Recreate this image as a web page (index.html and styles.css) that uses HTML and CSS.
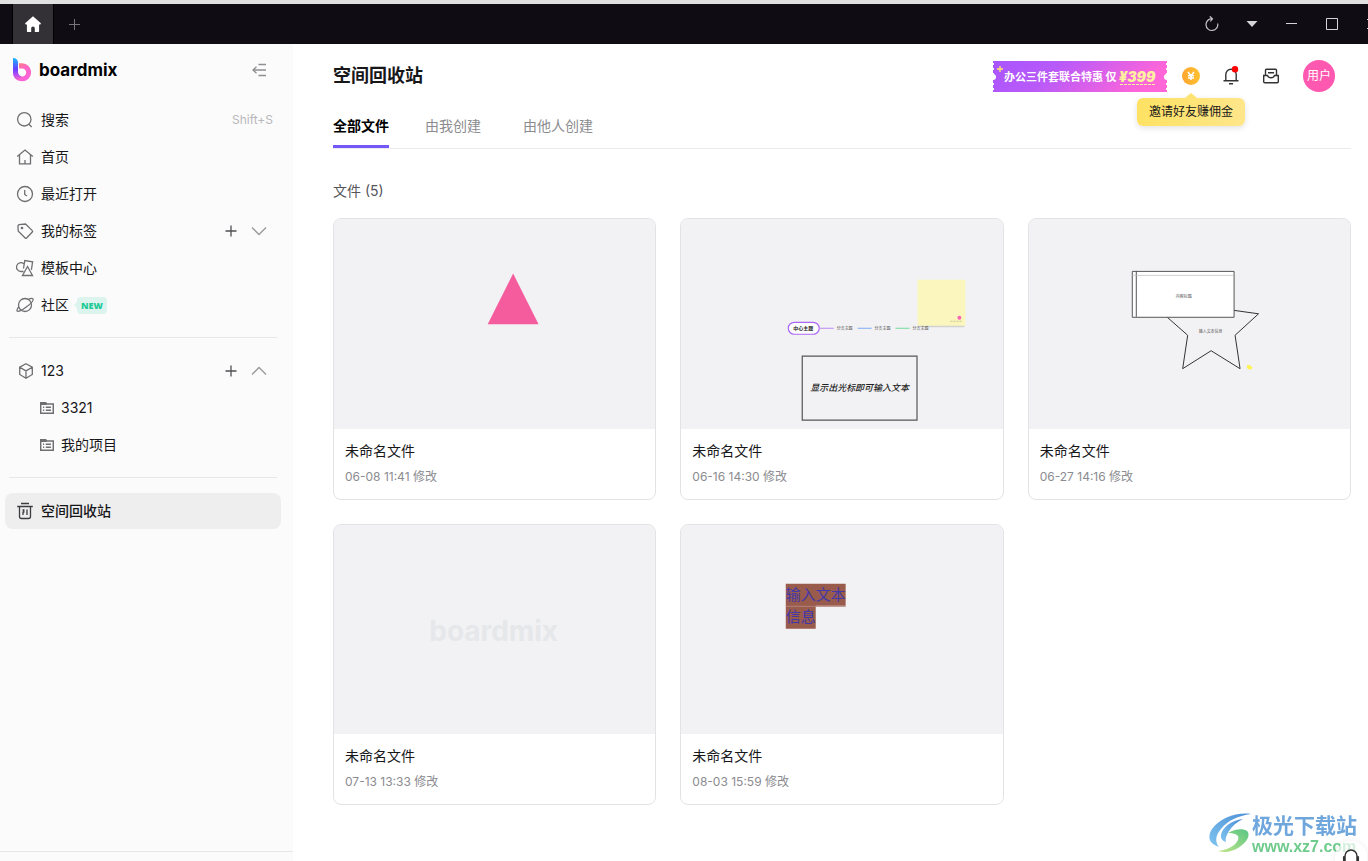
FILE: index.html
```html
<!DOCTYPE html>
<html lang="zh-CN">
<head>
<meta charset="utf-8">
<title>空间回收站 - boardmix</title>
<meta name="viewport" content="width=device-width, initial-scale=1">
<link rel="stylesheet" href="styles.css">
</head>
<body>
<div class="strip"></div>
<header class="titlebar">
  <button class="home-tab" aria-label="主页">
    <svg width="18" height="18" viewBox="0 0 18 18"><path d="M9 1.2 16.6 8c.6.6.2 1.4-.6 1.4h-.9V16c0 .6-.4 1-1 1h-3.3v-3.6c0-1-.8-1.8-1.8-1.8s-1.8.8-1.8 1.8V17H3.9c-.6 0-1-.4-1-1V9.400H2c-.8 0-1.200-.8-.6-1.400z" fill="#fff"/></svg>
  </button>
  <button class="win-btn" aria-label="新建标签">
    <svg width="11" height="11" viewBox="0 0 11 11"><path d="M5.500 0v11M0 5.500h11" stroke="#77757c" fill="none"/></svg>
  </button>
  <div class="win-controls">
    <button class="win-btn" aria-label="刷新"><svg width="16" height="16" viewBox="0 0 16 16" fill="none" stroke="#c4c3c6" stroke-width="1.200"><path d="M13.700 7.500A5.900 5.900 0 1 1 8 2.700M5.800.3 8.500 2.700 6.300 5.500"/></svg></button>
    <button class="win-btn" aria-label="更多"><svg width="12" height="8" viewBox="0 0 12 8"><path d="M.5 1h11L6 7z" fill="#d5d4d6"/></svg></button>
    <button class="win-btn" aria-label="最小化"><svg width="12" height="12" viewBox="0 0 12 12"><path d="M0 5.500h11" stroke="#d5d4d6"/></svg></button>
    <button class="win-btn" aria-label="最大化"><svg width="12" height="12" viewBox="0 0 12 12"><path d="M.5.5h11v11H.5z" fill="none" stroke="#d5d4d6"/></svg></button>
    <button class="win-btn" aria-label="关闭"><svg width="10" height="10" viewBox="0 0 10 10"><path d="m0 0 10 10M10 0 0 10" stroke="#d5d4d6"/></svg></button>
  </div>
</header>

<div class="app">
  <aside class="sidebar">
    <div class="brand">
      <svg width="18" height="24" viewBox="0 0 18 24" fill="none">
        <defs>
          <linearGradient id="stem" x1="0" y1="0" x2="0" y2="1"><stop offset="0" stop-color="#18b8ff"/><stop offset=".5" stop-color="#6a3dff"/><stop offset=".75" stop-color="#b44df5"/><stop offset="1" stop-color="#ff66c4"/></linearGradient>
          <linearGradient id="bowl" x1="0" y1="0" x2=".6" y2="1"><stop offset="0" stop-color="#ff8a5c"/><stop offset=".45" stop-color="#ff66c4"/><stop offset="1" stop-color="#fb63d8"/></linearGradient>
        </defs>
        <path d="M6 5.300h3.200A9 9 0 1 1 .1 14.400L5 14.300a4.100 4.100 0 1 0 4.200-3.900H6z" fill="url(#bowl)"/>
        <path d="M0 0c3 0 5 1.800 5 4.500v9.800c.1 2 1.500 3.700 3.500 4.100L5 22.400C1.700 21 0 18.300 0 14.600z" fill="url(#stem)"/>
      </svg>
      <span class="wordmark">boardmix</span>
      <button class="icon-btn collapse" aria-label="收起侧栏"><svg width="16" height="14" viewBox="0 0 16 14" fill="none" stroke="#8f8f91" stroke-width="1.300"><path d="M6.500 1.500H14M1.500 7H14M6.500 12.500H14M4.500 3.700 1 7l3.500 3.300"/></svg></button>
    </div>
    <nav class="nav">
      <a class="item" href="#"><svg class="ico" viewBox="0 0 18 18"><circle cx="8.300" cy="8.300" r="6.700"/><path d="m13 13.200 2.600 2.800"/></svg>搜索<span class="key">Shift+S</span></a>
      <a class="item" href="#"><svg class="ico" viewBox="0 0 18 18"><path d="M1.200 8.600 9 2l7.800 6.600M3.500 7v8.800h11V7M9 15.800V12"/></svg>首页</a>
      <a class="item" href="#"><svg class="ico" viewBox="0 0 18 18"><circle cx="9" cy="9" r="7.500"/><path d="M8.700 5v4.500l2.300 1.500"/></svg>最近打开</a>
      <div class="item"><a class="link" href="#"><svg class="ico" viewBox="0 0 18 18"><path d="M3 2.700 9.500 2 16.300 8.600a1 1 0 0 1 0 1.400l-5.700 6a1 1 0 0 1-1.400 0L2.300 9.300 1.900 4z"/><circle cx="6" cy="6" r=".7"/></svg>我的标签</a>
        <span class="actions"><button class="icon-btn" aria-label="添加标签"><svg width="12" height="12" viewBox="0 0 12 12"><path class="plus" d="M6 .5v11M.5 6h11"/></svg></button><button class="icon-btn" aria-label="展开"><svg width="16" height="10" viewBox="0 0 16 10"><path class="chev" d="m1 1.500 7 7 7-7"/></svg></button></span></div>
      <a class="item" href="#"><svg class="ico" viewBox="0 0 18 18"><path d="M7.500 12.500H5a4.400 4.400 0 1 1 2.700-7.800M7.500 9.500 8.800 1.500l7.800 1.300-1.200 8M11.500 7.500l5 9H6.500z"/></svg>模板中心</a>
      <a class="item" href="#"><svg class="ico" viewBox="0 0 18 18"><circle cx="9" cy="9" r="6.500"/><path d="M12.500 3.200c2.400-1 4-1.100 4.400-.4.900 1.500-2 4.900-6.300 7.900C6 14.200 2 16.300 1.100 15c-.5-.8.300-2.500 1.800-4.200"/></svg>社区<span class="badge">NEW</span></a>
    </nav>
    <hr class="rule">
    <nav class="nav">
      <div class="item"><a class="link" href="#"><svg class="ico" viewBox="0 0 18 18"><path d="m10 1.700 6.300 3.500v7.300L10 16.300l-6.300-3.800V5.200zM3.700 5.200 10 8.900l6.300-3.700M10 8.900v7.400"/></svg>123</a>
        <span class="actions"><button class="icon-btn" aria-label="添加项目"><svg width="12" height="12" viewBox="0 0 12 12"><path class="plus" d="M6 .5v11M.5 6h11"/></svg></button><button class="icon-btn" aria-label="收起"><svg width="16" height="10" viewBox="0 0 16 10"><path class="chev" d="m1 8.500 7-7 7 7"/></svg></button></span></div>
      <a class="item sub" href="#"><svg class="ico small" viewBox="0 0 14 14"><path d="M.7 12.300V1.700h5l1 1.300h6.600v9.300zM.7 3.300h6M3 6.300h1.200M3 9.300h1.200M5.800 6.300H11M5.800 9.300H11"/></svg>3321</a>
      <a class="item sub" href="#"><svg class="ico small" viewBox="0 0 14 14"><path d="M.7 12.300V1.700h5l1 1.300h6.600v9.300zM.7 3.300h6M3 6.300h1.200M3 9.300h1.200M5.800 6.300H11M5.800 9.300H11"/></svg>我的项目</a>
    </nav>
    <hr class="rule">
    <nav class="nav">
      <a class="item active" href="#" aria-current="page"><svg class="ico" viewBox="0 0 18 18"><path d="M5 1.500h8M1.200 4.500h15.600M3.500 4.500v10a2 2 0 0 0 2 2h7a2 2 0 0 0 2-2v-10M6.500 8h1.300v2.200H7V13M11 7.500V13"/></svg>空间回收站</a>
    </nav>
    <div class="side-foot"></div>
  </aside>

  <main class="main">
    <div class="head">
      <h1>空间回收站</h1>
      <div class="tools">
        <button class="promo">
          <svg width="174" height="31" viewBox="0 0 174 31">
            <defs><linearGradient id="promo" x1="0" y1="0" x2="1" y2=".2"><stop offset="0" stop-color="#a855ff"/><stop offset=".4" stop-color="#b95af8"/><stop offset="1" stop-color="#ff66d8"/></linearGradient></defs>
            <path d="M0 0h174v31H0z" fill="url(#promo)"/>
            <path d="M0 2v29M174 2v29" stroke="#fff" stroke-width="2" stroke-dasharray="2 3"/>
            <circle cx="0" cy="16" r="3" fill="#fff"/><circle cx="174" cy="16" r="3" fill="#fff"/>
            <path d="M7 5v6M4 8h6" stroke="#ffe66b" stroke-width="1.300"/>
            <text class="promo-text" x="11" y="20">办公三件套联合特惠 仅</text>
            <text class="promo-price" x="126" y="21">¥399</text>
            <path d="M127 23.500h36" stroke="#fff0a0" stroke-dasharray="3 1"/>
          </svg>
        </button>
        <button class="tool coin" aria-label="邀请好友赚佣金">
          <svg width="18" height="18" viewBox="0 0 18 18"><defs><linearGradient id="coin"><stop offset="0" stop-color="#ffa52e"/><stop offset="1" stop-color="#ffc233"/></linearGradient></defs><circle cx="9" cy="9" r="9" fill="url(#coin)"/><path d="m6 5 3 3.800L12 5M9 8.500V13M6 8.800h6M6 11h6" stroke="#fff" stroke-width="1.500" fill="none"/></svg>
          <span class="tip">邀请好友赚佣金</span>
        </button>
        <button class="tool" aria-label="通知">
          <svg width="18" height="20" viewBox="0 0 18 20" fill="none" stroke="#333" stroke-width="1.400"><path d="M3.800 14.800V8.500a5.200 5.200 0 0 1 10.400 0v6.300M1.500 14.800h15M7 17.800h4"/><circle cx="13" cy="3.200" r="3.200" fill="red" stroke="none"/></svg>
        </button>
        <button class="tool" aria-label="收件箱">
          <svg width="18" height="18" viewBox="0 0 18 18" fill="none" stroke="#333" stroke-width="1.400"><path d="M3.500 8V3.300a1 1 0 0 1 1-1h9a1 1 0 0 1 1 1V8M6 5.800h6M1.700 8.500v6.300a1 1 0 0 0 1 1h12.600a1 1 0 0 0 1-1V8.500h-3.800c-.6 1.600-1.800 2.300-3.500 2.300s-2.900-.7-3.500-2.300z"/></svg>
        </button>
        <button class="avatar">用户</button>
      </div>
    </div>
    <div class="tabs" role="tablist">
      <button class="tab on" role="tab" aria-selected="true">全部文件</button>
      <button class="tab" role="tab" aria-selected="false">由我创建</button>
      <button class="tab" role="tab" aria-selected="false">由他人创建</button>
    </div>
    <p class="count">文件 (5)</p>
    <section class="grid">
      <article class="card">
        <svg class="thumb" viewBox="0 0 322 210"><path d="M179.500 54.500l25.500 51h-51z" fill="#f55c9e"/></svg>
        <div class="info"><h2>未命名文件</h2><p>06-08 11:41 修改</p></div>
      </article>
      <article class="card">
        <svg class="thumb" viewBox="0 0 322 210">
          <rect x="107.500" y="103.500" width="31" height="12" rx="6" fill="#fff" stroke="#a968f5" stroke-width="1.200"/>
          <text class="node root" x="122.500" y="111">中心主题</text>
          <path d="M139 109.500h14" stroke="#ba8cf5"/><path d="M177 109.500h14" stroke="#80aaf8"/><path d="M215 109.500h14" stroke="#70d99d"/>
          <text class="node" x="164" y="111">分支主题</text><text class="node" x="202" y="111">分支主题</text>
          <path d="M239 106h45v2.500h-45z" fill="#888" opacity=".3"/>
          <path d="M237 61h48v46h-48z" fill="#faf6bd"/>
          <text class="node" x="240" y="111">分支主题</text>
          <circle cx="279" cy="99" r="2" fill="#fa65b5"/><path d="M270 102.500h11" stroke="#c8c49a" stroke-dasharray="2 1"/>
          <path d="M121.500 137.500h115v64h-115z" fill="none" stroke="#555" stroke-width="1.200"/>
          <text class="shape-text" x="179" y="172">显示出光标即可输入文本</text>
        </svg>
        <div class="info"><h2>未命名文件</h2><p>06-16 14:30 修改</p></div>
      </article>
      <article class="card">
        <svg class="thumb" viewBox="0 0 322 210">
          <path d="M205 91.500l25 3.500-23.500 21.500 5 33.500-29-18-28.500 18 5-33.500-21-18.500" fill="none" stroke="#333"/>
          <path d="M103.500 52.500h102v46h-102z" fill="#fff" stroke="#555"/><path d="M107.500 52v46" stroke="#555"/><path d="M103 56.500h102" stroke="#bbb" stroke-width=".7"/>
          <text class="node" x="155" y="79">内容标题</text><text class="node" x="182" y="114">输入文本信息</text>
          <path d="M218 147l3-1 3 3-2 2-3-1z" fill="#fff34f"/>
        </svg>
        <div class="info"><h2>未命名文件</h2><p>06-27 14:16 修改</p></div>
      </article>
      <article class="card">
        <svg class="thumb" viewBox="0 0 322 210"><text class="blank" x="160" y="116">boardmix</text></svg>
        <div class="info"><h2>未命名文件</h2><p>07-13 13:33 修改</p></div>
      </article>
      <article class="card">
        <svg class="thumb" viewBox="0 0 322 210"><path d="M105 59h60v22h-30v23h-30z" fill="#985b4c"/><path d="M105 81.500h60" stroke="#b48478"/><text class="marked" x="105" y="75">输入文本</text><text class="marked" x="105" y="97">信息</text></svg>
        <div class="info"><h2>未命名文件</h2><p>08-03 15:59 修改</p></div>
      </article>
    </section>
  </main>
</div>

<div class="watermark">
  <svg width="44" height="42" viewBox="0 0 44 42">
    <defs><linearGradient id="wb" x1="1" y1="0" x2="0" y2="1"><stop offset="0" stop-color="#4c8fd6"/><stop offset="1" stop-color="#7fc4f0"/></linearGradient><linearGradient id="wg" x1="1" y1="0" x2="0" y2="1"><stop offset="0" stop-color="#58c583"/><stop offset="1" stop-color="#c5e68a"/></linearGradient></defs>
    <path d="M43 2C29 0 12 6 4 17c-5 8-3 15 7 18-4-5-4-11 2-18C20 8 30 4 43 2z" fill="url(#wb)"/>
    <path d="M35 7C23 8 14 16 13 23c-.5 4 2 6 5 7-1-3 0-6 3-11 3-5 8-9 14-12z" fill="url(#wb)"/>
    <path d="M20 21c6-4 15-5 19-2 5 5-3 15-13 19-5 2-11 3-16 1 10-1 18-6 20-11 2-5-3-7-10-7z" fill="url(#wg)"/>
  </svg>
  <div class="wm-text"><span class="wm-name">极光下载站</span><span class="wm-url">www.xz7.com</span></div>
</div>
<button class="support" aria-label="客服"><svg width="18" height="18" viewBox="0 0 18 18" fill="none" stroke="#333" stroke-width="1.500"><path d="M3 10V8a6 6 0 0 1 12 0v2M3 9H1.700v4H3zM15 9h1.300v4H15zM15 13c0 2-2 3-5 3"/></svg></button>
</body>
</html>
```
FILE: styles.css
```css
* { box-sizing: border-box; }
body {
  margin: 0;
  min-height: 100vh;
  display: flex;
  flex-direction: column;
  background: #fff;
  color: #17171a;
  font: 14px/20px Inter, "Noto Sans CJK SC", sans-serif;
}
button { border: 0; padding: 0; background: none; color: inherit; font: inherit; cursor: pointer; }
a { color: inherit; text-decoration: none; }
h1, h2, p { margin: 0; }
svg { display: block; }

.strip { height: 4px; background: #e1e1e1; }
.titlebar { display: flex; height: 40px; padding-left: 12px; overflow: hidden; background: #0f0c13; }
.titlebar button { display: grid; place-items: center; flex: none; width: 40px; height: 40px; }
.titlebar .home-tab { width: 42px; border: solid #000; border-width: 0 1px; background: #333136; }
.win-controls { display: flex; margin-left: auto; margin-right: -24px; }

.app { flex: 1; display: flex; }
.sidebar { flex: none; width: 293px; display: flex; flex-direction: column; background: #fbfbfb; }
.brand { display: flex; align-items: center; gap: 8px; height: 52px; margin-bottom: 6px; padding: 0 23px 0 13px; }
.wordmark { font-size: 17px; font-weight: 700; color: #000; }
.icon-btn { display: grid; place-items: center; width: 20px; height: 20px; }
.collapse { margin-left: auto; }
.nav { display: flex; flex-direction: column; gap: 1px; padding: 0 12px 0 5px; }
.item { display: flex; align-items: center; height: 36px; padding: 0 8px 0 11px; border-radius: 8px; }
.link { display: flex; align-items: center; }
.ico { flex: none; width: 18px; height: 18px; margin-right: 7px; fill: none; stroke: #6f6f72; stroke-width: 1.3; }
.ico.small { width: 14px; height: 14px; stroke-width: 1.5; }
.sub { padding-left: 35px; }
.key { margin-left: auto; color: #b8b8ba; font-size: 12px; }
.badge { position: relative; margin-left: 8px; padding: 0 4px; border-radius: 4px; background: #dcf4ed; color: #1fc998; font: 800 9px/17px "Open Sans", sans-serif; }
.badge::before { content: ""; position: absolute; left: -3px; top: 5px; border: solid transparent; border-width: 3px 3px 3px 0; border-right-color: #dcf4ed; }
.actions { display: flex; gap: 8px; margin-left: auto; padding-right: 4px; }
.plus { fill: none; stroke: #4f4f52; stroke-width: 1.3; }
.chev { fill: none; stroke: #98989a; stroke-width: 1.3; }
.rule { width: 268px; height: 1px; margin: 14px 0 15px 9px; border: 0; background: #e8e8e8; }
.active { background: #eee; font-weight: 500; }
.active .ico { stroke: #3c3c40; }
.side-foot { height: 10px; margin-top: auto; border-top: 1px solid #e6e6e6; }

.main { flex: 1; min-width: 0; padding: 0 17px 40px 40px; }
.head { display: flex; align-items: center; justify-content: space-between; height: 64px; }
h1 { font-size: 18px; line-height: 24px; font-weight: 700; }
.tools { display: flex; align-items: center; padding-right: 16px; }
.promo { margin-right: 4px; }
.promo-text { fill: #fff; font: 700 11px "Noto Sans CJK SC", sans-serif; }
.promo-price { fill: #fff0a0; font: italic 900 14px Inter, sans-serif; }
.tool { position: relative; display: grid; place-items: center; width: 40px; height: 32px; }
.tip { position: absolute; z-index: 1; top: 38px; left: 50%; transform: translateX(-50%); padding: 0 12px; border-radius: 6px; background: linear-gradient(90deg, #ffe263, #ffe68a); box-shadow: 0 2px 6px rgba(0, 0, 0, .12); font-size: 12px; line-height: 28px; white-space: nowrap; }
.tip::before { content: ""; position: absolute; top: -5px; left: 50%; margin-left: -6px; border: solid transparent; border-width: 0 6px 5px; border-bottom-color: #ffe370; }
.avatar { width: 32px; height: 32px; margin-left: 12px; border-radius: 50%; background: #ff58b0; color: #fff; font-size: 12px; }

.tabs { display: flex; gap: 36px; border-bottom: 1px solid #ebebed; }
.tab { padding: 8px 0 9px; border-bottom: 3px solid transparent; color: #8c8c90; }
.tab:last-child { margin-left: 6px; }
.tab.on { border-color: #7558f5; color: #000; font-weight: 700; }
.count { margin: 32px 0 17px; color: #55555a; }
.grid { display: grid; grid-template-columns: repeat(3, 1fr); gap: 24px; }
.card { overflow: hidden; border: 1px solid #e3e3e6; border-radius: 8px; background: #fff; }
.thumb { width: 100%; background: #f2f2f4; }
.info { padding: 12px 11px; }
.info h2 { margin-bottom: 6px; font-size: 14px; font-weight: 400; line-height: 20px; }
.info p { color: #8b8b90; font-size: 12px; line-height: 20px; }
.node { fill: #555; font: 4px "Noto Sans CJK SC", sans-serif; text-anchor: middle; }
.node.root { fill: #222; font-weight: 700; font-size: 5px; }
.shape-text { fill: #222; font: italic 500 9px "Noto Sans CJK SC", sans-serif; text-anchor: middle; }
.blank { fill: #e6e7ea; font: 700 28px Inter, sans-serif; text-anchor: middle; }
.marked { fill: #4338a8; font: 15px "Noto Sans CJK SC", sans-serif; }

.watermark { position: fixed; right: 11px; bottom: 5px; display: flex; align-items: center; pointer-events: none; }
.wm-text { display: flex; flex-direction: column; }
.wm-name { color: #6fa6dc; font: 700 21px/28px "Noto Sans CJK SC", sans-serif; }
.wm-url { color: #6fcb8c; font: 700 16px/18px "Liberation Sans", sans-serif; }
.support { position: fixed; right: 1px; bottom: -12px; display: grid; place-items: center; width: 32px; height: 32px; border-radius: 50%; background: rgba(255, 255, 255, .7); box-shadow: 0 0 6px rgba(0, 0, 0, .08); }
```
